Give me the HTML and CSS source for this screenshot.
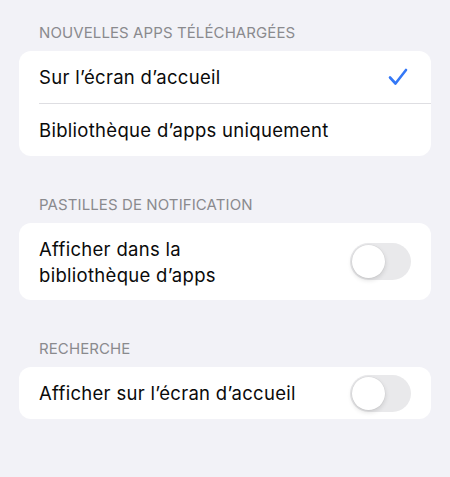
FILE: index.html
```html
<!DOCTYPE html>
<html lang="fr">
<head>
<meta charset="utf-8">
<link rel="stylesheet" href="styles.css">
</head>
<body>
<div class="page">
  <section class="group">
    <h2 class="group-title">NOUVELLES APPS TÉLÉCHARGÉES</h2>
    <div class="card">
      <div class="row">
        <span class="label">Sur l’écran d’accueil</span>
        <svg class="check" width="20" height="18" viewBox="0 0 20 18"><path d="M2 9.5 L7.5 15.5 L18 2" fill="none" stroke="#3478f6" stroke-width="2.6" stroke-linecap="round" stroke-linejoin="round"/></svg>
      </div>
      <div class="divider"></div>
      <div class="row">
        <span class="label">Bibliothèque d’apps uniquement</span>
      </div>
    </div>
  </section>
  <section class="group">
    <h2 class="group-title">PASTILLES DE NOTIFICATION</h2>
    <div class="card">
      <div class="row row-tall">
        <span class="label label-wrap">Afficher dans la<br>bibliothèque d’apps</span>
        <span class="toggle"><span class="knob"></span></span>
      </div>
    </div>
  </section>
  <section class="group">
    <h2 class="group-title">RECHERCHE</h2>
    <div class="card">
      <div class="row">
        <span class="label">Afficher sur l’écran d’accueil</span>
        <span class="toggle"><span class="knob"></span></span>
      </div>
    </div>
  </section>
</div>
</body>
</html>
```

FILE: styles.css
```css
html, body {
  margin: 0;
  padding: 0;
  background: #f2f2f7;
}
body {
  font-family: Inter, "Liberation Sans", sans-serif;
  color: #000;
  width: 450px;
  height: 477px;
  overflow: hidden;
}
.page {
  padding: 24px 19px 0 19px;
  display: flex;
  flex-direction: column;
  gap: 40px;
}
.group {
  display: flex;
  flex-direction: column;
}
.group-title {
  margin: 0 0 9px 20px;
  font-size: 15px;
  line-height: 18px;
  font-weight: 400;
  color: #8a8a8e;
  letter-spacing: 0.1px;
}
.card {
  background: #fff;
  border-radius: 12px;
  overflow: hidden;
}
.row {
  height: 52px;
  display: flex;
  align-items: center;
  justify-content: space-between;
  padding: 0 20px 0 20px;
}
.row-tall {
  height: 77px;
}
.label {
  font-size: 18.5px;
  line-height: 26px;
  letter-spacing: 0.3px;
  color: #0a0a0a;
}
.check {
  display: block;
  margin-right: 3px;
}
.divider {
  height: 1px;
  background: #dedee2;
  margin-left: 20px;
}
.toggle {
  width: 61px;
  height: 37px;
  border-radius: 19px;
  background: #e9e9eb;
  position: relative;
  flex: none;
}
.knob {
  position: absolute;
  left: 2px;
  top: 2px;
  width: 33px;
  height: 33px;
  border-radius: 50%;
  background: #fff;
  box-shadow: 0 2px 5px rgba(0,0,0,0.14), 0 0 0 0.5px rgba(0,0,0,0.05);
}
```
